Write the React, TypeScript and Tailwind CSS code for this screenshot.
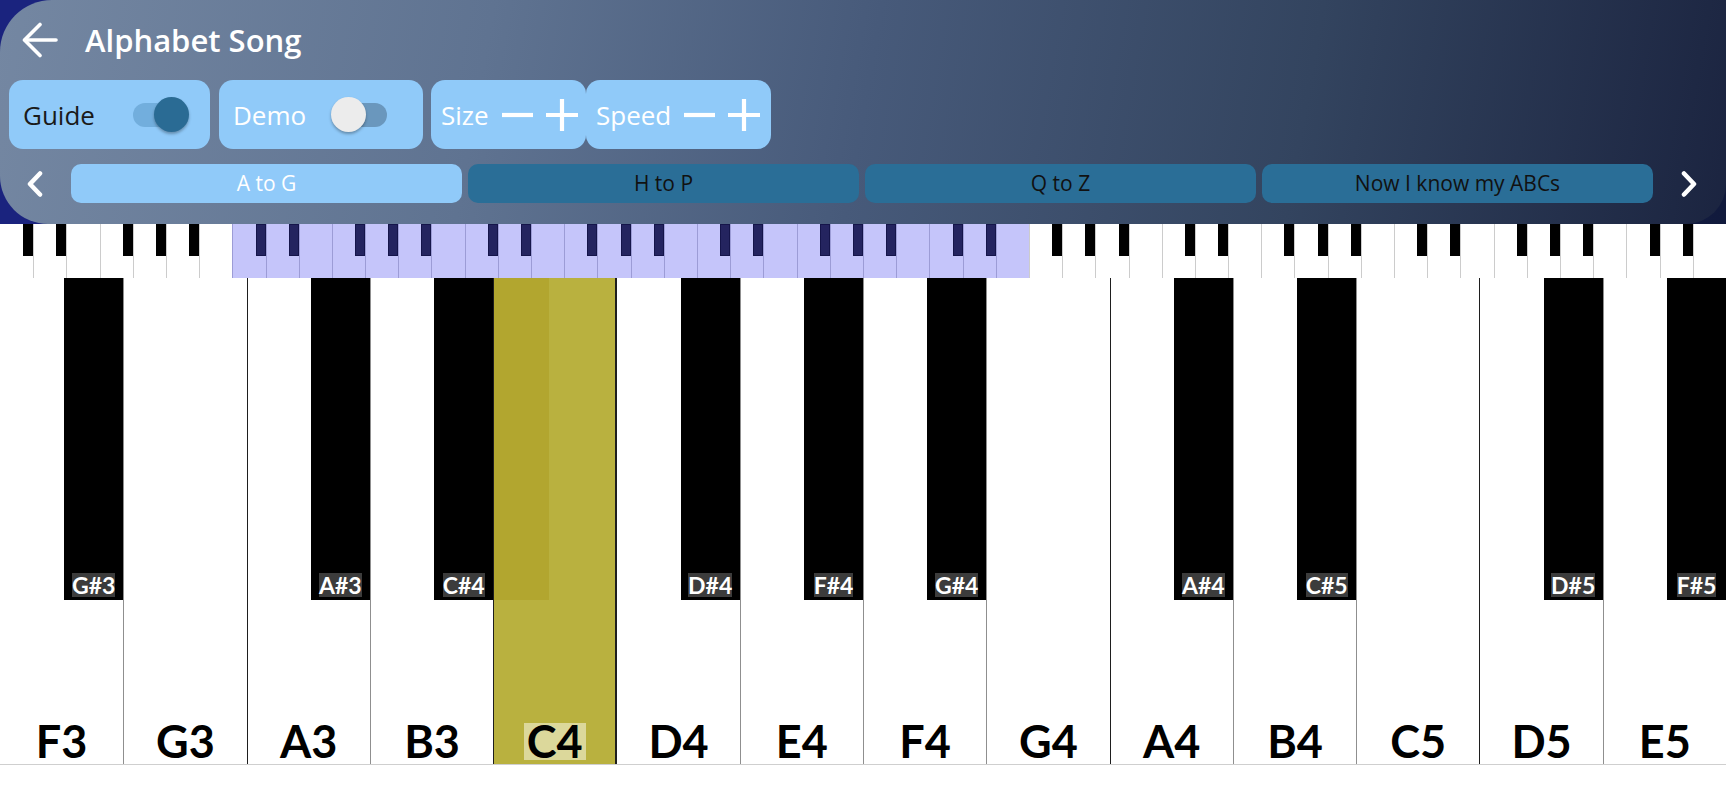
import clsx from "clsx";

const whiteNames = ["F3", "G3", "A3", "B3", "C4", "D4", "E4", "F4", "G4", "A4", "B4", "C5", "D5", "E5"];
const blackNames: Record<number, string> = {
  0: "G#3",
  2: "A#3",
  3: "C#4",
  5: "D#4",
  6: "F#4",
  7: "G#4",
  9: "A#4",
  10: "C#5",
  12: "D#5",
  13: "F#5",
};

const miniHasBlack = (k: number) => [0, 1, 3, 4, 5].includes(k % 7);

const BackArrow = () => (
  <svg width="36" height="36" viewBox="0 0 36 36" fill="none" stroke="white" strokeWidth="3.6" strokeLinecap="round" strokeLinejoin="round">
    <path d="M34 18H3" />
    <path d="M18 2.5 2.5 18 18 33.5" />
  </svg>
);

const Chevron = ({ dir }: { dir: "left" | "right" }) => (
  <svg width="18" height="26" viewBox="0 0 18 26" fill="none" stroke="white" strokeWidth="4.5" strokeLinecap="round" strokeLinejoin="round">
    {dir === "left" ? <path d="M14 2.5 4 13l10 10.5" /> : <path d="M4 2.5 14 13 4 23.5" />}
  </svg>
);

const Minus = () => (
  <svg width="32" height="32" viewBox="0 0 32 32" stroke="white" strokeWidth="4.2">
    <path d="M0 16h31" />
  </svg>
);

const Plus = () => (
  <svg width="32" height="32" viewBox="0 0 32 32" stroke="white" strokeWidth="4.2">
    <path d="M0 16h32M16 0v32" />
  </svg>
);

const Header = () => {
  return (
    <div className="h-[224px] bg-[linear-gradient(90deg,#1a237e_0%,#1a237e_60%,#111a3c_100%)]">
      <div className="h-[224px] rounded-tl-[52px] rounded-bl-[48px] rounded-br-[40px] bg-[linear-gradient(100deg,#7487a2_0%,#5f7391_28%,#475a7a_50%,#33445f_75%,#1b2440_100%)] pt-[16px] font-['Open_Sans',sans-serif]">
        {/* title */}
        <div className="flex h-[48px] items-center pl-[22px]">
          <BackArrow />
          <span className="ml-[27px] text-[31px] font-semibold leading-none text-white">Alphabet Song</span>
        </div>

        {/* controls */}
        <div className="mt-[16px] flex h-[69px] items-stretch pl-[9px]">
          <div className="flex w-[201px] items-center rounded-[14px] bg-[#90caf9] pl-[14px] pr-[21px]">
            <span className="text-[26px] leading-none text-[#1a1a1a]">Guide</span>
            <div className="relative ml-auto h-[35px] w-[56px]">
              <div className="absolute left-0 top-[5.5px] h-[24px] w-[49px] rounded-full bg-[#72aedd]" />
              <div className="absolute right-0 top-0 h-[35px] w-[35px] rounded-full bg-[#2a6b94] shadow-[0_2px_3px_rgba(0,0,0,0.3)]" />
            </div>
          </div>

          <div className="ml-[9px] flex w-[204px] items-center rounded-[14px] bg-[#90caf9] pl-[14px] pr-[36px]">
            <span className="text-[26px] leading-none text-white">Demo</span>
            <div className="relative ml-auto h-[35px] w-[56px]">
              <div className="absolute right-0 top-[5.5px] h-[24px] w-[49px] rounded-full bg-[#6a97bd]" />
              <div className="absolute left-0 top-0 h-[35px] w-[35px] rounded-full bg-[#ececec] shadow-[0_2px_3px_rgba(0,0,0,0.3)]" />
            </div>
          </div>

          <div className="ml-[8px] flex w-[155px] items-center rounded-[14px] bg-[#90caf9] pl-[10px]">
            <span className="text-[26px] leading-none text-white">Size</span>
            <div className="ml-[13px]">
              <Minus />
            </div>
            <div className="ml-[12px]">
              <Plus />
            </div>
          </div>

          <div className="flex w-[185px] items-center rounded-[14px] bg-[#90caf9] pl-[10px]">
            <span className="text-[26px] leading-none text-white">Speed</span>
            <div className="ml-[13px]">
              <Minus />
            </div>
            <div className="ml-[12px]">
              <Plus />
            </div>
          </div>
        </div>

        {/* song parts */}
        <div className="mt-[15px] flex h-[39px] items-center pl-[26px]">
          <Chevron dir="left" />
          <div className="ml-[27px] flex gap-[6px]">
            <div className="flex h-[39px] w-[391px] items-center justify-center rounded-[10px] bg-[#90caf9] text-[21px] text-white">A to G</div>
            <div className="flex h-[39px] w-[391px] items-center justify-center rounded-[10px] bg-[#2a6e97] text-[21px] text-[#111]">H to P</div>
            <div className="flex h-[39px] w-[391px] items-center justify-center rounded-[10px] bg-[#2a6e97] text-[21px] text-[#111]">Q to Z</div>
            <div className="flex h-[39px] w-[391px] items-center justify-center rounded-[10px] bg-[#2a6e97] text-[21px] text-[#111]">Now I know my ABCs</div>
          </div>
          <div className="ml-[27px]">
            <Chevron dir="right" />
          </div>
        </div>
      </div>
    </div>
  );
};

const MiniKeyboard = () => {
  return (
    <div className="grid h-[54px] grid-cols-52 bg-white">
      {Array.from({ length: 52 }, (_, k) => {
        const hl = k >= 7 && k <= 30;
        return (
          <div
            key={k}
            className={clsx(
              "relative",
              k > 0 && "border-l",
              hl ? "bg-[#c5c5fa] border-[#9c9cd6]" : "bg-white border-[#cccccc]"
            )}
          >
            {miniHasBlack(k) && (
              <div
                className={clsx(
                  "absolute right-0 top-0 h-[32px] w-[10px]",
                  hl ? "border border-[#15154a] bg-[#24245f]" : "bg-black"
                )}
              />
            )}
          </div>
        );
      })}
    </div>
  );
};

const Keyboard = () => {
  return (
    <div className="grid h-[487px] grid-cols-14 border-b border-[#cfcfcf] font-['Lato',sans-serif]">
      {whiteNames.map((name, k) => {
        const active = name === "C4";
        const darkEdge = k % 7 === 2 || k % 7 === 5 || active;
        return (
          <div
            key={name}
            className={clsx(
              "relative flex items-end justify-center pb-[4px]",
              k > 0 && "border-l",
              darkEdge ? "border-[#1e1e1e]" : "border-[#8f8f8f]",
              active ? "border-r border-r-[#1e1e1e] bg-[#b9b13f]" : "bg-white"
            )}
          >
            {active && <div className="absolute left-0 top-0 h-[322px] w-[55px] bg-[#b2a62f]" />}
            <span
              className={clsx(
                "relative text-[45px] font-bold leading-[37px] text-black",
                active && "bg-[#dcd89b] px-[3px]"
              )}
            >
              {name}
            </span>
            {blackNames[k] && (
              <div className="absolute right-0 top-0 flex h-[322px] w-[59px] items-end justify-center bg-black pb-[3px]">
                <span className="bg-[#3c3c3c] text-[23px] font-bold leading-[24px] text-white">{blackNames[k]}</span>
              </div>
            )}
          </div>
        );
      })}
    </div>
  );
};

export default function App() {
  return (
    <div className="h-[800px] w-[1726px] overflow-hidden bg-white">
      <Header />
      <MiniKeyboard />
      <Keyboard />
    </div>
  );
}
